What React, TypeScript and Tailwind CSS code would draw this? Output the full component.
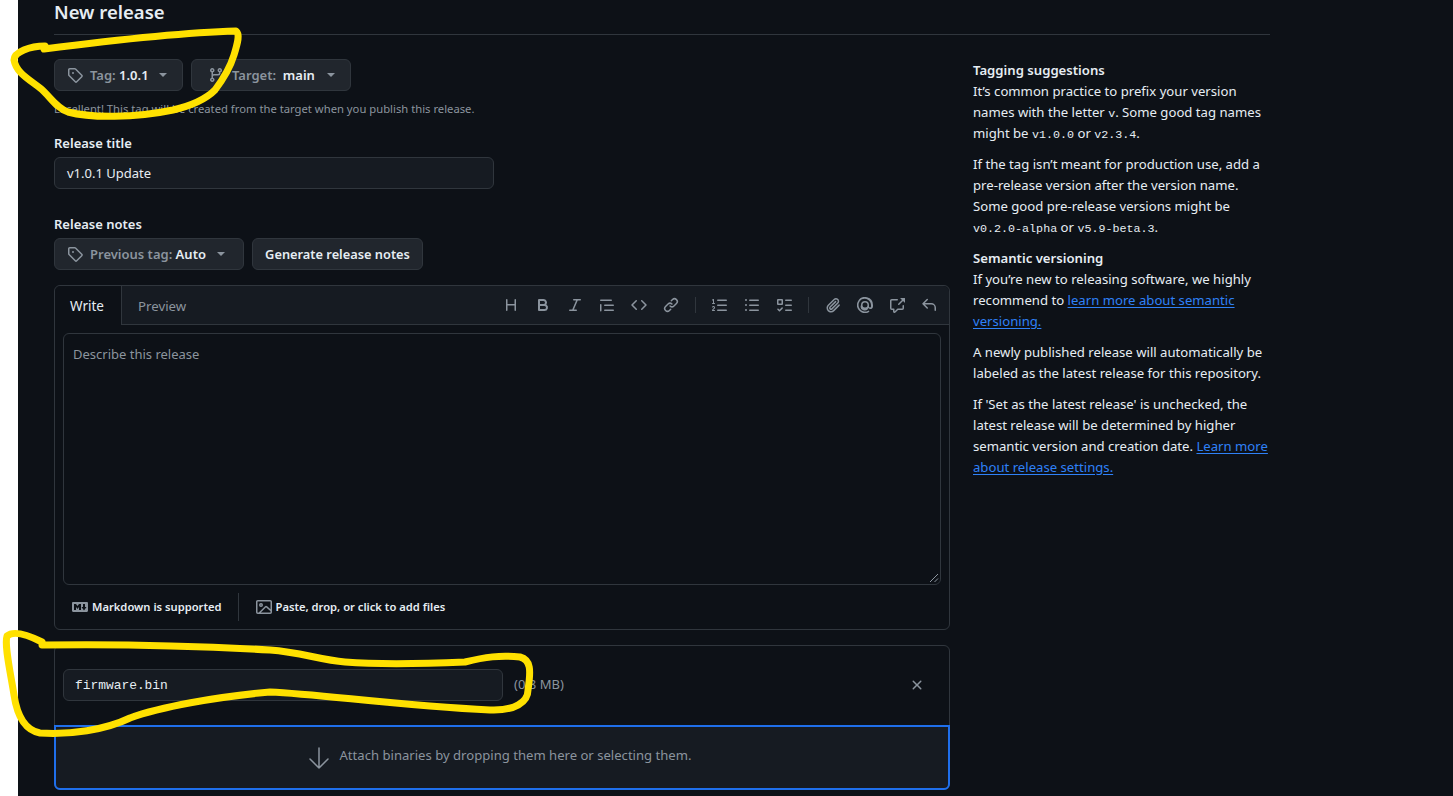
import React from "react";

const paths: Record<string, string> = {
  tag: "M1 7.775V2.75C1 1.784 1.784 1 2.75 1h5.025c.464 0 .91.184 1.238.513l6.25 6.25a1.75 1.75 0 0 1 0 2.474l-5.026 5.026a1.75 1.75 0 0 1-2.474 0l-6.25-6.25A1.75 1.75 0 0 1 1 7.775Zm1.5 0c0 .066.026.13.073.177l6.25 6.25a.25.25 0 0 0 .354 0l5.025-5.025a.25.25 0 0 0 0-.354l-6.25-6.25a.25.25 0 0 0-.177-.073H2.75a.25.25 0 0 0-.25.25ZM6 5a1 1 0 1 1 0 2 1 1 0 0 1 0-2Z",
  branch: "M9.5 3.25a2.25 2.25 0 1 1 3 2.122V6A2.5 2.5 0 0 1 10 8.5H6a1 1 0 0 0-1 1v1.128a2.251 2.251 0 1 1-1.5 0V5.372a2.25 2.25 0 1 1 1.5 0v1.836A2.493 2.493 0 0 1 6 7h4a1 1 0 0 0 1-1v-.628A2.25 2.25 0 0 1 9.5 3.25Zm-6 0a.75.75 0 1 0 1.5 0 .75.75 0 0 0-1.5 0Zm8.25-.75a.75.75 0 1 0 0 1.5.75.75 0 0 0 0-1.5ZM4.25 12a.75.75 0 1 0 0 1.5.75.75 0 0 0 0-1.5Z",
  heading: "M3.75 2a.75.75 0 0 1 .75.75V7h7V2.75a.75.75 0 0 1 1.5 0v10.5a.75.75 0 0 1-1.5 0V8.5h-7v4.75a.75.75 0 0 1-1.5 0V2.75A.75.75 0 0 1 3.75 2Z",
  bold: "M4 2h4.5a3.501 3.501 0 0 1 2.852 5.53A3.499 3.499 0 0 1 9.5 14H4a1 1 0 0 1-1-1V3a1 1 0 0 1 1-1Zm1 7v3h4.5a1.5 1.5 0 0 0 0-3Zm3.5-2a1.5 1.5 0 0 0 0-3H5v3Z",
  italic: "M6 2.75A.75.75 0 0 1 6.75 2h6.5a.75.75 0 0 1 0 1.5h-2.505l-3.858 9H9.25a.75.75 0 0 1 0 1.5h-6.5a.75.75 0 0 1 0-1.5h2.505l3.858-9H6.75A.75.75 0 0 1 6 2.75Z",
  quote: "M1.75 2.5h10.5a.75.75 0 0 1 0 1.5H1.75a.75.75 0 0 1 0-1.5Zm4 5h8.5a.75.75 0 0 1 0 1.5h-8.5a.75.75 0 0 1 0-1.5Zm0 5h8.5a.75.75 0 0 1 0 1.5h-8.5a.75.75 0 0 1 0-1.5ZM2.5 7.75v6a.75.75 0 0 1-1.5 0v-6a.75.75 0 0 1 1.5 0Z",
  code: "m11.28 3.22 4.25 4.25a.75.75 0 0 1 0 1.06l-4.25 4.25a.749.749 0 0 1-1.275-.326.749.749 0 0 1 .215-.734L13.94 8l-3.72-3.72a.749.749 0 0 1 .326-1.275.749.749 0 0 1 .734.215Zm-6.56 0a.751.751 0 0 1 1.042.018.751.751 0 0 1 .018 1.042L2.06 8l3.72 3.72a.749.749 0 0 1-.326 1.275.749.749 0 0 1-.734-.215L.47 8.53a.75.75 0 0 1 0-1.06Z",
  link: "m7.775 3.275 1.25-1.25a3.5 3.5 0 1 1 4.95 4.95l-2.5 2.5a3.5 3.5 0 0 1-4.95 0 .751.751 0 0 1 .018-1.042.751.751 0 0 1 1.042-.018 1.998 1.998 0 0 0 2.83 0l2.5-2.5a2.002 2.002 0 0 0-2.83-2.83l-1.25 1.25a.751.751 0 0 1-1.042-.018.751.751 0 0 1-.018-1.042Zm-4.69 9.64a1.998 1.998 0 0 0 2.83 0l1.25-1.25a.751.751 0 0 1 1.042.018.751.751 0 0 1 .018 1.042l-1.25 1.25a3.5 3.5 0 1 1-4.95-4.95l2.5-2.5a3.5 3.5 0 0 1 4.95 0 .751.751 0 0 1-.018 1.042.751.751 0 0 1-1.042.018 1.998 1.998 0 0 0-2.83 0l-2.5 2.5a1.998 1.998 0 0 0 0 2.83Z",
  ordered: "M5 3.25a.75.75 0 0 1 .75-.75h8.5a.75.75 0 0 1 0 1.5h-8.5A.75.75 0 0 1 5 3.25Zm0 5a.75.75 0 0 1 .75-.75h8.5a.75.75 0 0 1 0 1.5h-8.5A.75.75 0 0 1 5 8.25Zm0 5a.75.75 0 0 1 .75-.75h8.5a.75.75 0 0 1 0 1.5h-8.5a.75.75 0 0 1-.75-.75ZM.924 10.32a.5.5 0 0 1-.851-.525l.001-.001.001-.002.002-.004.007-.011c.097-.144.215-.273.348-.384.228-.19.588-.392 1.068-.392.468 0 .858.181 1.126.484.259.294.377.673.377 1.038 0 .987-.686 1.495-1.156 1.845l-.047.035c-.303.225-.522.4-.654.597h1.357a.5.5 0 0 1 0 1H.5a.5.5 0 0 1-.5-.5c0-1.005.692-1.52 1.167-1.875l.035-.025c.531-.396.8-.625.8-1.078a.57.57 0 0 0-.128-.376C1.806 10.068 1.695 10 1.5 10a.658.658 0 0 0-.429.163.835.835 0 0 0-.144.153ZM2.003 2.5V6h.503a.5.5 0 0 1 0 1H.5a.5.5 0 0 1 0-1h.503V3.308l-.28.14a.5.5 0 0 1-.446-.895l1.003-.5a.5.5 0 0 1 .723.447Z",
  unordered: "M5.75 2.5h8.5a.75.75 0 0 1 0 1.5h-8.5a.75.75 0 0 1 0-1.5Zm0 5h8.5a.75.75 0 0 1 0 1.5h-8.5a.75.75 0 0 1 0-1.5Zm0 5h8.5a.75.75 0 0 1 0 1.5h-8.5a.75.75 0 0 1 0-1.5ZM2 14a1 1 0 1 1 0-2 1 1 0 0 1 0 2Zm1-6a1 1 0 1 1-2 0 1 1 0 0 1 2 0ZM2 4a1 1 0 1 1 0-2 1 1 0 0 1 0 2Z",
  tasklist: "M2 2h4a1 1 0 0 1 1 1v4a1 1 0 0 1-1 1H2a1 1 0 0 1-1-1V3a1 1 0 0 1 1-1Zm4.655 8.595a.75.75 0 0 1 0 1.06L4.03 14.28a.75.75 0 0 1-1.06 0l-1.5-1.5a.749.749 0 0 1 .326-1.275.749.749 0 0 1 .734.215l.97.97 2.095-2.095a.75.75 0 0 1 1.06 0ZM9.75 2.5h5.5a.75.75 0 0 1 0 1.5h-5.5a.75.75 0 0 1 0-1.5Zm0 5h5.5a.75.75 0 0 1 0 1.5h-5.5a.75.75 0 0 1 0-1.5Zm0 5h5.5a.75.75 0 0 1 0 1.5h-5.5a.75.75 0 0 1 0-1.5Zm-7.25-9v3h3v-3Z",
  paperclip: "M12.212 3.02a1.753 1.753 0 0 0-2.478.003l-5.83 5.83a3.007 3.007 0 0 0-.88 2.127c0 .795.315 1.551.88 2.116.567.567 1.333.89 2.126.89.79 0 1.548-.321 2.116-.89l5.48-5.48a.75.75 0 0 1 1.061 1.06l-5.48 5.48a4.492 4.492 0 0 1-3.177 1.33c-1.2 0-2.345-.487-3.187-1.33a4.483 4.483 0 0 1-1.32-3.177c0-1.195.475-2.341 1.32-3.186l5.83-5.83a3.25 3.25 0 0 1 5.553 2.297c0 .863-.343 1.691-.953 2.301L7.439 12.39c-.375.377-.884.59-1.416.593a1.998 1.998 0 0 1-1.412-.593 1.992 1.992 0 0 1 0-2.828l5.48-5.48a.751.751 0 0 1 1.042.018.751.751 0 0 1 .018 1.042l-5.48 5.48a.492.492 0 0 0 0 .707.499.499 0 0 0 .352.154.51.51 0 0 0 .356-.154l5.833-5.827a1.755 1.755 0 0 0 0-2.481Z",
  mention: "M4.75 2.37a6.501 6.501 0 0 0 6.5 11.26.75.75 0 0 1 .75 1.298A7.999 7.999 0 0 1 .989 4.148 8 8 0 0 1 16 8v1.5a2.5 2.5 0 0 1-4.542 1.443A3.999 3.999 0 0 1 4 8a4 4 0 0 1 8 0v1.5a1 1 0 0 0 2 0V8a6.5 6.5 0 0 0-9.25-5.63ZM10.5 8a2.5 2.5 0 1 0-5 0 2.5 2.5 0 0 0 5 0Z",
  crossref: "M2.75 3.5a.25.25 0 0 0-.25.25v7.5c0 .138.112.25.25.25h2a.75.75 0 0 1 .75.75v2.19l2.72-2.72a.749.749 0 0 1 .53-.22h4.5a.25.25 0 0 0 .25-.25v-2.5a.75.75 0 0 1 1.5 0v2.5A1.75 1.75 0 0 1 13.25 13H9.06l-2.573 2.573A1.458 1.458 0 0 1 4 14.543V13H2.75A1.75 1.75 0 0 1 1 11.25v-7.5C1 2.784 1.784 2 2.75 2h5.5a.75.75 0 0 1 0 1.5ZM16 1.25v4.146a.25.25 0 0 1-.427.177L14.03 4.03l-3.75 3.75a.749.749 0 0 1-1.275-.326.749.749 0 0 1 .215-.734l3.75-3.75-1.543-1.543A.25.25 0 0 1 11.604 1h4.146a.25.25 0 0 1 .25.25Z",
  reply: "M6.78 1.97a.75.75 0 0 1 0 1.06L3.81 6h6.44A4.75 4.75 0 0 1 15 10.75v2.5a.75.75 0 0 1-1.5 0v-2.5a3.25 3.25 0 0 0-3.25-3.25H3.81l2.97 2.97a.749.749 0 0 1-.326 1.275.749.749 0 0 1-.734-.215L1.47 7.28a.75.75 0 0 1 0-1.06l4.25-4.25a.75.75 0 0 1 1.06 0Z",
  markdown: "M14.85 3c.63 0 1.15.52 1.14 1.15v7.7c0 .63-.51 1.15-1.15 1.15H1.15C.52 13 0 12.48 0 11.84V4.15C0 3.52.52 3 1.15 3ZM9 11V5H7L5.5 7 4 5H2v6h2V8l1.5 1.92L7 8v3Zm2.99.5L14.5 8H13V5h-2v3H9.5Z",
  image: "M16 13.25A1.75 1.75 0 0 1 14.25 15H1.75A1.75 1.75 0 0 1 0 13.25V2.75C0 1.784.784 1 1.75 1h12.5c.966 0 1.75.784 1.75 1.75ZM1.75 2.5a.25.25 0 0 0-.25.25v10.5c0 .138.112.25.25.25h.94l.03-.03 6.077-6.078a1.75 1.75 0 0 1 2.412-.06L14.5 10.31V2.75a.25.25 0 0 0-.25-.25Zm12.5 11a.25.25 0 0 0 .25-.25v-.917l-4.298-3.889a.25.25 0 0 0-.344.009L4.81 13.5ZM7 6a2 2 0 1 1-3.999.001A2 2 0 0 1 7 6ZM5.5 6a.5.5 0 1 0-1 0 .5.5 0 0 0 1 0Z",
  x: "M3.72 3.72a.75.75 0 0 1 1.06 0L8 6.94l3.22-3.22a.749.749 0 0 1 1.275.326.749.749 0 0 1-.215.734L9.06 8l3.22 3.22a.749.749 0 0 1-.326 1.275.749.749 0 0 1-.734-.215L8 9.06l-3.22 3.22a.751.751 0 0 1-1.042-.018.751.751 0 0 1-.018-1.042L6.94 8 3.72 4.78a.75.75 0 0 1 0-1.06Z",
};

const Icon = ({ name, className = "" }: { name: string; className?: string }) => (
  <svg viewBox="0 0 16 16" width="16" height="16" fill="currentColor" className={`shrink-0 ${className}`}>
    <path d={paths[name]} />
  </svg>
);

const Caret = () => (
  <span className="h-0 w-0 border-x-[4px] border-t-[4px] border-x-transparent border-t-[#8b949e]" />
);

const Code = ({ children }: { children: React.ReactNode }) => (
  <code className="[font-family:'Liberation_Mono',monospace] text-[11.7px] leading-none">{children}</code>
);

const SideLink = ({ children }: { children: React.ReactNode }) => (
  <a className="text-[#2f81f7] underline underline-offset-2">{children}</a>
);

const toolbarGroups = [
  ["heading", "bold", "italic", "quote", "code", "link"],
  ["ordered", "unordered", "tasklist"],
  ["paperclip", "mention", "crossref", "reply"],
];

export default function App() {
  return (
    <div className="relative h-[796px] overflow-hidden bg-white pl-[18px] [font-family:'Noto_Sans',sans-serif] text-[14px] text-[#e6edf3]">
      <div className="h-full bg-[#0d1117] pl-[36px] pr-[183px]">
        <div className="h-[35px] border-b border-[#30363d]">
          <h1 className="text-[18.5px] font-semibold leading-[24px]">New release</h1>
        </div>

        <div className="flex gap-[23px] pt-[24px]">
          <main className="w-[896px] shrink-0">
            <div className="flex gap-2">
              <button className="flex h-8 w-[129px] items-center rounded-md border border-[#30363d] bg-[#21262d] pl-[12px] text-[13px] font-semibold">
                <Icon name="tag" className="mr-[7px] text-[#8b949e]" />
                <div className="pt-[2px]">
                  <span className="text-[#8b949e]">Tag:&nbsp;</span>1.0.1
                </div>
                <span className="ml-[10px] flex"><Caret /></span>
              </button>
              <button className="flex h-8 w-[160px] items-center rounded-md border border-[#30363d] bg-[#21262d] pl-[16px] text-[13px] font-semibold">
                <Icon name="branch" className="mr-[8px] text-[#8b949e]" />
                <div className="pt-[2px]">
                  <span className="text-[#8b949e]">Target:&nbsp;</span>&nbsp;main
                </div>
                <span className="ml-[12px] flex"><Caret /></span>
              </button>
            </div>
            <p className="mt-[9px] text-[11.25px] leading-[18px] text-[#8b949e]">
              Excellent! This tag will be created from the target when you publish this release.
            </p>

            <label className="mt-[16px] block text-[13px] font-semibold leading-[18px]">Release title</label>
            <div className="mt-[5px] flex h-8 w-[440px] items-center rounded-md border border-[#30363d] bg-[#161b22] px-3 pt-[2px] text-[13px]">
              v1.0.1 Update
            </div>

            <label className="mt-[26px] block text-[13px] font-semibold leading-[18px]">Release notes</label>
            <div className="mt-[5px] flex gap-2">
              <button className="flex h-8 w-[190px] items-center rounded-md border border-[#30363d] bg-[#21262d] pl-[12px] text-[13px] font-semibold">
                <Icon name="tag" className="mr-[7px] text-[#8b949e]" />
                <div className="pt-[2px]">
                  <span className="text-[#8b949e]">Previous tag:&nbsp;</span>Auto
                </div>
                <span className="ml-[11px] flex"><Caret /></span>
              </button>
              <button className="flex h-8 w-[171px] items-center justify-center rounded-md border border-[#30363d] bg-[#21262d] pt-[2px] text-[12.8px] font-semibold">
                Generate release notes
              </button>
            </div>

            <section className="mt-[15px] h-[345px] rounded-md border border-[#30363d]">
              <div className="flex h-[39px] items-stretch rounded-t-md border-b border-[#30363d] bg-[#161b22]">
                <div className="-mb-px flex w-[67px] items-center justify-center rounded-tl-md border-r border-[#30363d] bg-[#0d1117] pr-[2px] pt-[2px] text-[13.5px]">
                  Write
                </div>
                <div className="flex items-center pl-[16px] pt-[4px] text-[13.25px] text-[#8b949e]">Preview</div>
                <div className="ml-auto flex items-center pr-[12px] text-[#8b949e]">
                  {toolbarGroups.map((group, i) => (
                    <React.Fragment key={i}>
                      {i > 0 && <span className="mx-[16px] h-[16px] w-px bg-[#30363d]" />}
                      <div className="flex gap-[16px]">
                        {group.map((name) => (
                          <Icon key={name} name={name} />
                        ))}
                      </div>
                    </React.Fragment>
                  ))}
                </div>
              </div>
              <div className="px-[8px] pt-[8px]">
                <div className="relative h-[252px] rounded-md border border-[#30363d] px-[9px] pt-[11px] text-[13px] text-[#8b949e]">
                  Describe this release
                  <svg viewBox="0 0 10 10" width="10" height="10" className="absolute bottom-[1px] right-[1px] text-[#8b949e]" stroke="currentColor" fill="none">
                    <path d="M1 9 9 1M5.5 9 9 5.5" />
                  </svg>
                </div>
              </div>
              <div className="flex h-[44px] items-center pl-[17px] text-[11.2px] font-semibold">
                <Icon name="markdown" className="mr-[4px] text-[#8b949e]" />
                Markdown is supported
                <span className="ml-[16px] mr-[17px] h-[28px] w-px bg-[#30363d]" />
                <Icon name="image" className="mr-[4px] text-[#8b949e]" />
                Paste, drop, or click to add files
              </div>
            </section>

            <section className="mt-[15px] h-[145px] rounded-md border border-[#30363d]">
              <div className="flex h-[79px] items-center pb-px pl-[8px] pr-[24px]">
                <div className="flex h-8 w-[440px] items-center rounded-md border border-[#30363d] bg-[#161b22] pl-[11px] pt-px [font-family:'Liberation_Mono',monospace] text-[12.9px]">
                  firmware.bin
                </div>
                <span className="ml-[11px] text-[13px] text-[#8b949e]">(0.8 MB)</span>
                <Icon name="x" className="ml-auto text-[#8b949e]" />
              </div>
              <div className="-mx-px flex h-[65px] items-center justify-center gap-[9px] rounded-b-md border-2 border-[#1f6feb] bg-[#161b22] pr-[6px] text-[13.1px] text-[#8b949e]">
                <svg viewBox="0 0 24 24" width="24" height="24" fill="none" stroke="currentColor" strokeWidth="1.5" strokeLinecap="round" strokeLinejoin="round" className="shrink-0">
                  <path d="M12 2v20M3 13l9 9 9-9" />
                </svg>
                <span className="pb-[4px]">Attach binaries by dropping them here or selecting them.</span>
              </div>
            </section>
          </main>

          <aside className="w-[297px] shrink-0 pt-px text-[13.15px] leading-[21px]">
            <h3 className="font-semibold">Tagging suggestions</h3>
            <p>
              It’s common practice to prefix your version names with the letter <Code>v</Code>. Some good tag names might be <Code>v1.0.0</Code> or <Code>v2.3.4</Code>.
            </p>
            <p className="mt-[10px]">
              If the tag isn’t meant for production use, add a pre-release version after the version name. Some good pre-release versions might be <Code>v0.2.0-alpha</Code> or <Code>v5.9-beta.3</Code>.
            </p>
            <h3 className="mt-[10px] font-semibold">Semantic versioning</h3>
            <p>
              If you’re new to releasing software, we highly recommend to <SideLink>learn more about semantic versioning.</SideLink>
            </p>
            <p className="mt-[10px]">
              A newly published release will automatically be labeled as the latest release for this repository.
            </p>
            <p className="mt-[10px]">
              If 'Set as the latest release' is unchecked, the latest release will be determined by higher semantic version and creation date. <SideLink>Learn more about release settings.</SideLink>
            </p>
          </aside>
        </div>
      </div>

      {/* hand-drawn marker circles on top of the screenshot */}
      <svg viewBox="0 0 1453 796" className="pointer-events-none absolute inset-0 h-[796px] w-[1453px]" fill="none" stroke="#ffe100" strokeWidth="7" strokeLinecap="round" strokeLinejoin="round">
        <path d="M45 46C30 46 14 52 14 60C16 72 27 78 40 88C50 96 56 108 68 112C90 118 135 118 173 110C190 106 205 100 215 90C224 78 230 68 234 55C238 42 240 34 236 31C200 32 130 38 44 49" />
        <path d="M42 642C30 636 14 630 7 636C4 645 11 675 14 695C17 715 24 730 40 733C70 735 105 730 130 718C160 707 215 697 270 692C320 694 400 706 490 710C515 711 528 702 528 690C531 670 531 660 520 657C500 655 485 657 465 662C420 664 370 664 345 662C320 660 300 652 270 650C200 646 110 644 42 645" />
      </svg>
    </div>
  );
}
